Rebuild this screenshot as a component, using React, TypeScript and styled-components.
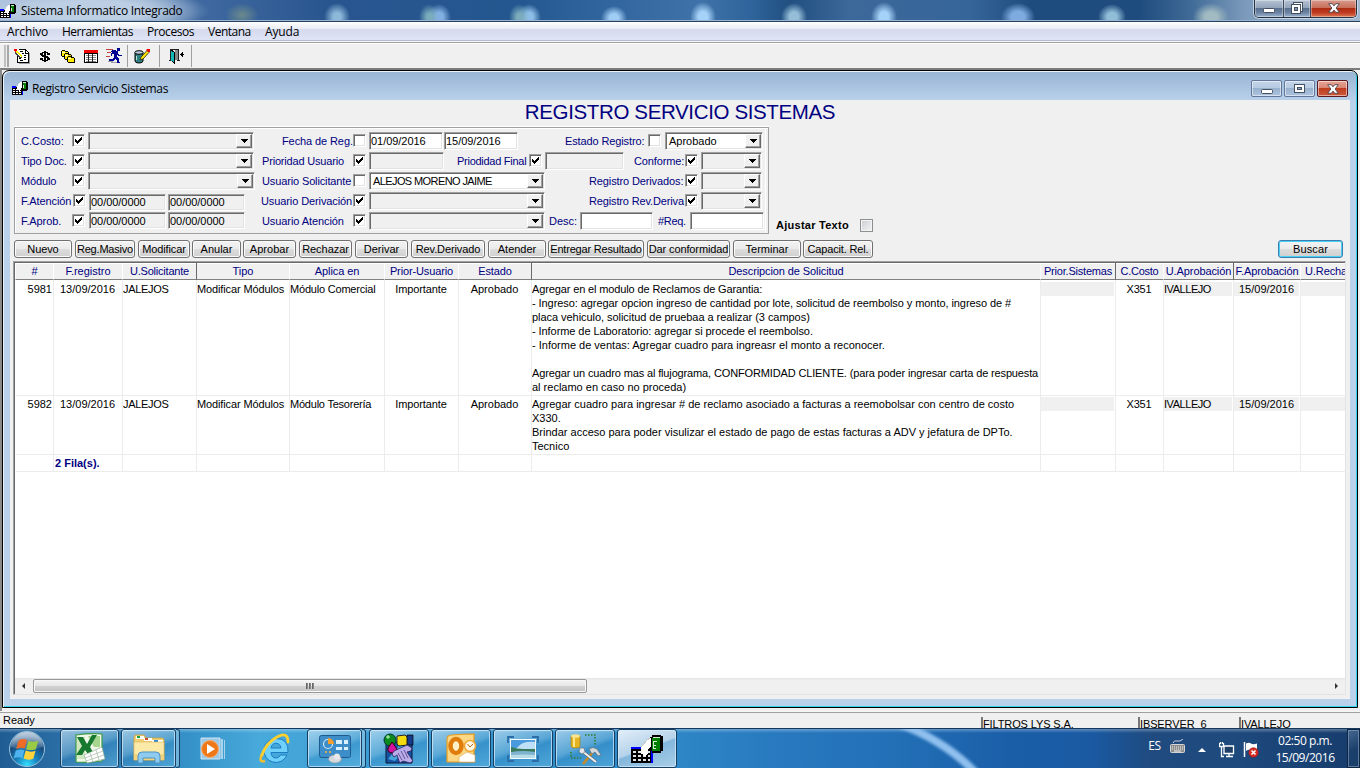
import React from "react";
import styled, { createGlobalStyle, css } from "styled-components";

const Global = createGlobalStyle`
  * { box-sizing: border-box; }
  html, body { margin: 0; padding: 0; width: 1360px; height: 768px; overflow: hidden; background: #f0f0f0; }
  body { font-family: "Liberation Sans", Arial, sans-serif; font-size: 11px; color: #000; }
  svg { display: block; }
`;

const segoe = css`font-family: "Open Sans", "Noto Sans", sans-serif;`;

const Screen = styled.div`
  width: 1360px; height: 768px; display: flex; flex-direction: column; overflow: hidden; background: #f0f0f0;
`;

/* ---------- application title bar ---------- */
const TitleBar = styled.header`
  ${segoe}
  height: 22px; flex: none; display: flex; align-items: flex-start; justify-content: space-between;
  border-bottom: 1px solid #26405f; box-shadow: inset 0 -1px 0 #9db6d0;
  background:
    radial-gradient(ellipse 120px 22px at 90px 11px, rgba(190,208,228,.95) 45%, rgba(190,208,228,0) 100%),
    radial-gradient(ellipse 17px 12px at 242px 15px, rgba(110,140,140,.85) 10%, transparent 100%),
    radial-gradient(ellipse 13px 14px at 337px 17px, rgba(145,190,220,.95) 30%, transparent 100%),
    radial-gradient(ellipse 10px 13px at 429px 17px, rgba(125,175,190,.95) 25%, transparent 100%),
    radial-gradient(ellipse 12px 13px at 439px 17px, rgba(135,180,230,.95) 35%, transparent 100%),
    radial-gradient(ellipse 10px 13px at 519px 17px, rgba(125,175,190,.95) 25%, transparent 100%),
    radial-gradient(ellipse 12px 13px at 529px 17px, rgba(145,195,235,.95) 35%, transparent 100%),
    radial-gradient(ellipse 13px 12px at 614px 18px, rgba(165,210,250,.95) 35%, transparent 100%),
    radial-gradient(ellipse 13px 15px at 703px 17px, rgba(165,210,248,1) 35%, transparent 100%),
    radial-gradient(ellipse 13px 14px at 794px 17px, rgba(155,195,220,.95) 35%, transparent 100%),
    radial-gradient(ellipse 13px 15px at 884px 17px, rgba(165,210,248,1) 35%, transparent 100%),
    radial-gradient(ellipse 17px 14px at 1018px 17px, rgba(130,175,228,.95) 40%, transparent 100%),
    radial-gradient(ellipse 14px 13px at 1112px 17px, rgba(150,195,220,.95) 35%, transparent 100%),
    radial-gradient(ellipse 18px 14px at 1211px 17px, rgba(165,190,195,.95) 35%, transparent 100%),
    linear-gradient(90deg, #a9bfd9 0, #8eabcd 140px, #3f69a0 200px, #29558f 330px, #24578f 520px, #2c6099 570px, #3f72a8 700px, #2f659c 750px, #214f80 790px, #3c689a 850px, #36659a 970px, #1f4c7e 1030px, #1f4c7e 1140px, #3f6a97 1190px, #7c9abb 1245px, #a2b8cf 1360px);
`;
const TitleLeft = styled.div`display: flex; align-items: center; height: 21px; gap: 5px; padding-top: 1px;`;
const AppTitle = styled.span`font-size: 12px; letter-spacing: -0.28px; white-space: nowrap; line-height: 20px;`;

const WinButtons = styled.div`
  display: flex; height: 18px; margin-right: 3px; border: 1px solid #26313f; border-top: 0;
  border-radius: 0 0 5px 5px; overflow: hidden; box-shadow: 0 0 0 1px rgba(220,232,245,.7);
`;
const WinButton = styled.div<{ $w: number; $close?: boolean }>`
  width: ${p => p.$w}px; height: 17px; display: flex; align-items: center; justify-content: center; padding-bottom: 1px;
  border-right: ${p => (p.$close ? "0" : "1px solid #3c4a5c")};
  box-shadow: inset 0 0 0 1px rgba(255,255,255,.35);
  background: ${p => p.$close
    ? "linear-gradient(#d79a8c 0, #c9705d 45%, #ad2d12 50%, #c03c22 75%, #dd7a55 100%)"
    : "linear-gradient(#b6c3d4 0, #93a4bb 45%, #5b7190 50%, #6c83a3 75%, #9db4d0 100%)"};
`;

/* ---------- menu & toolbar ---------- */
const MenuBar = styled.nav`
  ${segoe}
  height: 20px; flex: none; display: flex; align-items: center; padding-left: 7px; gap: 15px; font-size: 12px;
  background: linear-gradient(#fff 0, #e8ebf4 7px, #d4daec 7px, #dfe4f7 18px); border-bottom: 1px solid #f4f5fb;
  box-shadow: inset 0 -1px 0 #b5bccd;
`;
const MenuItem = styled.span<{ $w: number; $ls: number }>`width: ${p => p.$w}px; white-space: nowrap; letter-spacing: ${p => p.$ls}px; line-height: 18px;`;
const Toolbar = styled.div`
  height: 26px; flex: none; display: flex; align-items: stretch; background: #f0f0f0;
  border-top: 1px solid #a0a0a0; box-shadow: inset 0 1px 0 #fff; padding: 2px 0 1px 4px;
`;
const Grip = styled.div`width: 5px; margin-right: 1px; border-left: 2px solid #c0c0c0; border-right: 2px solid #a8a8a8;`;
const ToolGroup = styled.div<{ $w: number; $pad: number }>`
  width: ${p => p.$w}px; padding-left: ${p => p.$pad}px; display: flex; align-items: center;
  border-right: 1px solid #a0a0a0;
`;
const ToolSlot = styled.span`width: 23px; display: flex; justify-content: center;`;

/* ---------- MDI area ---------- */
const MdiArea = styled.main`
  height: 643px; flex: none; background: #f0f0f0; padding: 0 2px 3px 0;
  border-top: 2px solid #7c7c7c; border-left: 2px solid #8a8a8a;
`;
const Child = styled.section`
  width: 1356px; height: 638px; border: 1px solid #000; border-radius: 7px 7px 0 0; overflow: hidden;
  background: linear-gradient(#98b4d4 0, #b9d1ea 30px, #b9d1ea 100%);
  box-shadow: inset 1px 1px 0 #e9f4fc, inset -1px -1px 0 #2fd3ea; padding: 1px 7px 7px;
`;
const ChildTitle = styled.div`
  ${segoe}
  height: 28px; display: flex; align-items: center; font-size: 12px; padding: 5px 2px 0 2px; gap: 4px;
`;
const ChildName = styled.span`flex: 1; letter-spacing: -0.35px; line-height: 22px;`;
const ChildButton = styled.div<{ $close?: boolean }>`
  width: 31px; height: 17px; border: 1px solid ${p => (p.$close ? "#5b1a22" : "#62779a")}; border-radius: 2px;
  display: flex; align-items: center; justify-content: center; box-shadow: inset 0 0 0 1px rgba(255,255,255,.5);
  background: ${p => p.$close
    ? "linear-gradient(#e5a596 0, #d98572 48%, #bf3c1e 50%, #cb5a3c 100%)"
    : "linear-gradient(#c4d5e9 0, #b5cae2 48%, #98b1cd 50%, #adc4df 100%)"};
`;
const ChildButtons = styled.div`display: flex; gap: 2px;`;
const Content = styled.div`height: 599px; width: 1340px; background: #f0f0f0; padding: 0 4px;`;
const Heading = styled.h1`
  margin: 0; height: 27px; line-height: 23px; text-align: center; font-weight: 400; font-size: 20.5px; color: #000080;
  white-space: nowrap; letter-spacing: -0.36px;
`;

/* ---------- filters ---------- */
const FilterRow = styled.div`display: flex; align-items: flex-start; height: 107px;`;
const FilterBox = styled.div`
  width: 755px; height: 107px; border: 1px solid #a0a0a0; box-shadow: inset 1px 1px 0 #fff, inset -2px 0 0 #f0f0f0, inset -3px 0 0 #fff, 0 -1px 0 #fff;
  padding: 3px 0 0 6px;
`;
const Line = styled.div<{ $h?: number }>`display: flex; height: ${p => p.$h ?? 20}px; align-items: center;`;
const Label = styled.span<{ $w: number; $ml?: number; $ls?: number }>`
  width: ${p => p.$w}px; margin-left: ${p => p.$ml ?? 0}px; letter-spacing: ${p => p.$ls ?? 0}px;
  flex: none; white-space: nowrap; color: #000080; line-height: 14px;
`;
const sunken = css`
  border: 1px solid; border-color: #a0a0a0 #fff #fff #a0a0a0;
  box-shadow: inset 1px 1px 0 #696969, inset -1px -1px 0 #e3e3e3;
`;
const CheckBox = styled.span<{ $mr?: number }>`
  ${sunken} width: 13px; height: 13px; flex: none; background: #fff; padding: 2px; margin-right: ${p => p.$mr ?? 3}px; margin-top: -1px;
`;
const Field = styled.div<{ $w: number; $ml?: number; $on?: boolean; $h?: number; $top?: number }>`
  ${sunken} width: ${p => p.$w}px; height: ${p => p.$h ?? 18}px; flex: none; margin-left: ${p => p.$ml ?? 0}px;
  margin-top: ${p => p.$top ?? 0}px;
  background: ${p => (p.$on ? "#fff" : "#f0f0f0")}; padding: 0 2px 0 1px; line-height: 16px; white-space: nowrap;
  display: flex; justify-content: space-between; align-items: center; letter-spacing: -0.04px;
`;
const Drop = styled.span`
  width: 16px; height: 14px; margin-right: -1px; background: #f0f0f0; border: 1px solid; border-color: #fff #696969 #696969 #fff;
  box-shadow: inset -1px -1px 0 #a0a0a0; display: flex; align-items: center; justify-content: center;
`;
const ComboText = styled.span<{ $ls?: number }>`padding-left: 2px; letter-spacing: ${p => p.$ls ?? 0}px;`;
const Adjust = styled.div`margin: 91px 0 0 7px; display: flex; align-items: center; font-weight: 700; letter-spacing: .26px;`;
const AdjustText = styled.span`width: 84px; line-height: 15px; white-space: nowrap;`;
const FlatCheck = styled.span`width: 13px; height: 13px; border: 1px solid #8e8f8f; background: linear-gradient(135deg, #c8ccd1, #f6f6f6); box-shadow: inset 0 0 0 1px #f4f4f4;`;

/* ---------- buttons ---------- */
const Actions = styled.div`display: flex; height: 27px; padding: 6px 3px 0 0;`;
const Btn = styled.button<{ $w: number; $ml?: number; $ls?: number; $focus?: boolean }>`
  width: ${p => p.$w}px; height: 18px; margin: 0 0 0 ${p => p.$ml ?? 0}px; padding: 0; flex: none; font: inherit; line-height: 16px; white-space: nowrap;
  display: flex; justify-content: center; align-items: center; letter-spacing: ${p => p.$ls ?? 0}px;
  border: 1px solid ${p => (p.$focus ? "#3c7fb1" : "#707070")}; border-radius: 3px; overflow: hidden;
  background: linear-gradient(#f2f2f2 0, #ebebeb 48%, #dddddd 50%, #cfcfcf 100%);
  box-shadow: inset 0 0 0 1px ${p => (p.$focus ? "#48d0f5" : "#fcfcfc")};
`;

/* ---------- data grid ---------- */
const COLS = "38px 69px 74px 93px 95px 74px 73px 509px 75px 48px 70px 67px 46px";
const Table = styled.div`
  width: 1333px; height: 434px; margin-left: -1px; border: 1px solid; border-color: #a0a0a0 #e3e3e3 #e3e3e3 #a0a0a0;
  box-shadow: inset 1px 1px 0 #696969; background: #fff; padding: 1px 0 0 1px; display: flex; flex-direction: column;
`;
const Head = styled.div`display: grid; grid-template-columns: ${COLS}; height: 17px; flex: none; background: #f0f0f0; overflow: hidden;`;
const Th = styled.div<{ $raised?: boolean; $ls?: number }>`
  text-align: center; color: #000080; white-space: nowrap; overflow: hidden; line-height: 15px; padding-top: 1px; letter-spacing: ${p => p.$ls ?? 0}px;
  border-bottom: 1px solid #808080; border-left: 1px solid ${p => (p.$raised ? "#696969" : "#fff")}; box-shadow: inset 0 1px 0 #fff;
  &:last-child { text-align: left; padding-left: 4px; }
`;
const Tr = styled.div<{ $h: number; $pt?: number }>`
  display: grid; grid-template-columns: ${COLS}; height: ${p => p.$h}px; flex: none;
  & > div { padding-top: ${p => p.$pt ?? 2}px; }
`;
const Td = styled.div<{ $align?: string; $ls?: number; $bold?: boolean }>`
  border-left: 1px solid #ececec; border-bottom: 1px solid #ececec; line-height: 14px; padding-right: 1px; text-align: ${p => p.$align ?? "left"};
  letter-spacing: ${p => p.$ls ?? 0}px; white-space: nowrap; overflow: hidden;
  &:first-child { border-left-color: transparent; }
  ${p => p.$bold && css`font-weight: 700; color: #000080; padding-left: 1px;`}
`;
const TextLine = styled.div<{ $ls: number }>`height: 14px; letter-spacing: ${p => p.$ls}px;`;
const Shade = styled.div`background: #f0f0f0; height: 14px; margin-left: 0;`;
const Filler = styled.div`flex: 1;`;
const ScrollBar = styled.div`height: 16px; flex: none; display: flex; align-items: center; background: linear-gradient(#e6e6e6 0, #f0f0f0 3px); padding: 0 6px;`;
const Thumb = styled.div`
  width: 554px; height: 14px; margin-left: 7px; border: 1px solid #979797; border-radius: 2px; display: flex; align-items: center; justify-content: center; gap: 1px;
  background: linear-gradient(#f4f4f4 0, #e6e6e6 48%, #d2d2d2 50%, #c2c2c2 100%); box-shadow: inset 0 0 0 1px #f8f8f8;
`;
const ThumbMark = styled.i`width: 2px; height: 6px; background: linear-gradient(90deg, #555, #999);`;
const Spacer = styled.div`flex: 1;`;

/* ---------- status bar ---------- */
const Status = styled.div`
  height: 17px; flex: none; display: flex; border-top: 1px solid #f6f6f6; box-shadow: inset 0 1px 0 #a0a0a0; background: #f0f0f0;
  padding-left: 3px; font-size: 11px; overflow: hidden;
`;
const StatusText = styled.span<{ $w: number }>`width: ${p => p.$w}px; padding-top: 1px; line-height: 14px;`;
const StatusCell = styled.span<{ $w: number }>`
  width: ${p => p.$w}px; margin-top: 5px; line-height: 14px; font-size: 11px; letter-spacing: -.12px; border-left: 2px solid #777; white-space: nowrap;
`;

/* ---------- taskbar ---------- */
const Taskbar = styled.footer`
  position: relative; height: 40px; flex: none; display: flex; align-items: stretch; border-top: 1px solid #17365c; overflow: hidden;
  background: linear-gradient(rgba(255,255,255,.3), rgba(255,255,255,0) 4px),
    linear-gradient(90deg, #1f5c93 0, #2a6ea5 60px, #338fc6 180px, #48a9db 260px, #3696cf 420px, #2f8bc8 640px, #2879bf 780px, #226fb6 900px, #1a5ea8 1010px, #1a5aa3 1090px, #1f4b80 1150px, #1e4a7e 1230px, #163c6c 1360px);
`;
const Streak = styled.svg`position: absolute; left: 640px; top: 0;`;
const TaskBtn = styled.div<{ $w: number; $ml?: number; $kind?: "plain" | "active" }>`
  position: relative; width: ${p => p.$w}px; margin: 0 0 0 ${p => p.$ml ?? 0}px; height: 39px; display: flex; align-items: center; justify-content: center; flex: none;
  ${p => p.$kind !== "plain" && css`
    border: 1px solid #173e63; border-radius: 3px;
    box-shadow: inset 0 0 0 1px rgba(215,238,252,.7);
    background: ${p.$kind === "active"
      ? "linear-gradient(160deg, #e3eef8 0, #b5d3ea 48%, #84b7dc 52%, #a9cfe8 100%)"
      : "linear-gradient(160deg, rgba(200,228,245,.7) 0, rgba(130,190,225,.5) 45%, rgba(60,145,200,.35) 55%, rgba(110,190,230,.5) 100%)"};
  `}
`;
const Stack = styled.i`width: 4px; height: 39px; border: 1px solid #173e63; border-left: 0; border-radius: 0 3px 3px 0; background: rgba(170,215,240,.5); flex: none;`;
const Start = styled.div`width: 60px; padding-left: 8px; display: flex; align-items: center; flex: none;`;
const Tray = styled.div`${segoe} position: relative; flex: 1; display: flex; align-items: center; justify-content: flex-end; color: #fff; font-size: 12px;`;
const Lang = styled.span`font-size: 12px; margin-right: 9px; letter-spacing: -.2px; margin-top: -6px;`;
const TrayIcon = styled.span<{ $mr: number; $top?: number }>`margin-right: ${p => p.$mr}px; margin-top: ${p => p.$top ?? 0}px;`;
const Clock = styled.div`width: 70px; text-align: center; line-height: 17px; letter-spacing: -.45px; margin-right: 7px;`;
const ShowDesktop = styled.div`width: 13px; height: 39px; border: 1px solid #0f2643; box-shadow: inset 0 0 0 1px rgba(140,170,205,.55); background: linear-gradient(150deg, #46688f, #1b3f6b 55%);`;

/* ---------- drawings ---------- */
const DataIcon = () => (
  <svg width="32" height="28" viewBox="0 0 32 28" shapeRendering="crispEdges">
    <path d="M0 13h22v15H0z" fill="#000" />
    <path d="M0 12h10v2H0zM20 12h2v16h-2z" fill="#0000ff" />
    <path d="M2 16h3v2H2zM7 16h3v2H7zM12 16h3v2h-3zM2 20h3v2H2zM7 20h3v2H7zM12 20h3v2h-3zM2 24h3v2H2zM7 24h3v2H7zM12 24h3v2h-3zM17 16h2v2h-2zM17 20h2v2h-2zM17 24h2v2h-2z" fill="#dfe3e8" />
    <path d="M21 0h9v1h2v15h-2v2h-9v-2h-2V2h2z" fill="#000" />
    <path d="M21 3h8v13h-8z" fill="#008000" />
    <path d="M22 2h7v1h-7zM22 6h4v1h-4zM22 10h3v1h-3zM22 7h1v7h-1zM22 13h3v1h-3z" fill="#d6e8d6" />
    <path d="M20 3v9l-3 2v5h-1l-2 3-2-3h-2v-8l3-2 3-4z" fill="#fff" />
    <path d="M19 3l-3 2-3 4-3 3" fill="none" stroke="#c8c8c8" />
  </svg>
);
const DataIconSmall = () => (
  <svg width="16" height="15" viewBox="0 0 16 15" shapeRendering="crispEdges">
    <path d="M0 6h11v8H0z" fill="#000" />
    <path d="M0 5h4v2H0zM10 6h1v8h-1z" fill="#0000ff" />
    <path d="M1 8h2v1H1zM4 8h2v1H4zM7 8h2v1H7zM1 10h2v1H1zM4 10h2v1H4zM7 10h2v1H7zM1 12h2v1H1zM4 12h2v1H4zM7 12h2v1H7z" fill="#fff" />
    <path d="M10 0h5v1h1v8h-1v1h-5z" fill="#000" />
    <path d="M11 2h3v6h-3z" fill="#008000" /><path d="M11 1h3v1h-3zM11 4h1v3h-1z" fill="#d6e8d6" />
    <path d="M8 1h2v6H9v2H8v1H7V9H5V5h1V3h1V2h1z" fill="#fff" />
  </svg>
);
const Check = () => (
  <svg width="7" height="7" viewBox="0 0 7 7" shapeRendering="crispEdges">
    <path d="M0 2h1v1h1v1h1v-1h1v-1h1v-1h1v-1h1v3h-1v1h-1v1h-1v1h-1v1h-1v-1h-1v-1h-1z" fill="#000" />
  </svg>
);
const Arrow = () => <svg width="7" height="4" viewBox="0 0 7 4" shapeRendering="crispEdges"><path d="M0 0h7v1h-1v1h-1v1h-1v1h-1v-1h-1v-1h-1v-1h-1z" fill="#000" /></svg>;
const MinGlyph = () => <svg width="12" height="10" viewBox="0 0 12 10"><rect x=".5" y="5.5" width="11" height="4" rx="1" fill="#fff" stroke="#444f5f" /></svg>;
const MaxGlyph = () => <svg width="11" height="9" viewBox="0 0 11 9"><rect x=".5" y=".5" width="10" height="8" fill="#fff" stroke="#444f5f" /><rect x="3.5" y="3.5" width="4" height="2" fill="#8fa6c3" stroke="#444f5f" /></svg>;
const RestoreGlyph = () => (
  <svg width="12" height="12" viewBox="0 0 12 12"><rect x="2.5" y=".5" width="9" height="9" fill="#fff" stroke="#444f5f" /><rect x=".5" y="2.5" width="9" height="9" fill="#fff" stroke="#444f5f" /><rect x="3.5" y="5.5" width="3" height="3" fill="#8394ad" stroke="#444f5f" /></svg>
);
const CloseGlyph = () => <svg width="12" height="10" viewBox="0 0 12 10"><path d="M.7.7h3.600L6 2.900 7.700.7h3.600L8.100 5l3.200 4.300H7.700L6 7.100 4.300 9.300H.7L3.900 5z" fill="#fff" stroke="#4e4550" strokeWidth=".9" /></svg>;

const NoteIcon = () => (
  <svg width="16" height="16" viewBox="0 0 16 16" shapeRendering="crispEdges">
    <path d="M4 1h8v1h1v1h1v1h1v10h-11z" fill="#fff" />
    <path d="M5 1h7v1H5zM12 2h1v1h-1zM13 3h1v1h-1zM14 4h1v11h-1zM4 14h11v1H4zM3 8h1v7H3zM11 2h1v3h3v1h-4z" fill="#000" />
    <path d="M15 5h1v11H5v-1h10z" fill="#a0a0a0" />
    <path d="M6 3h3v1H6zM8 5h2v1H8zM10 7h2v1h-2zM5 10h2v1H5zM10 9h2v1h-2zM6 12h3v1H6zM10 11h2v1h-2z" fill="#000" />
    <path d="M0 1h3v2H2v1H1V3H0z" fill="#f00" />
    <path d="M2 3h2v1h1v1h1v1h1v1h1v2H7V8H6V7H5V6H4V5H2z" fill="#ffee00" />
    <path d="M1 4h1v1h1v1h1v1h1v1h1v1h2v1H5V9H4V8H3V7H2V6H1z" fill="#444" />
  </svg>
);
const DollarIcon = () => (
  <svg width="10" height="11" viewBox="0 0 10 11" shapeRendering="crispEdges">
    <path d="M4 0h2v11H4zM2 1h6v1H2zM0 2h3v2H0zM7 2h3v2H7zM1 4h3v1H1zM2 5h6v1H2zM6 6h3v1H6zM7 7h3v2H7zM0 7h3v2H0zM2 9h6v1H2z" fill="#000" />
  </svg>
);
const FoldersIcon = () => (
  <svg width="14" height="13" viewBox="0 0 14 13" shapeRendering="crispEdges">
    {[[0, 0], [3, 3], [6, 6]].map(([x, y]) => (
      <g key={x} transform={`translate(${x} ${y})`}>
        <path d="M1 0h3v1h3v1h1v5H1V6H0V1h1z" fill="#000" /><path d="M1 1h3v1h3v4H1z" fill="#ffe900" /><path d="M1 2h3v1H1z" fill="#fffbd0" />
      </g>
    ))}
  </svg>
);
const SheetIcon = () => (
  <svg width="14" height="13" viewBox="0 0 14 13" shapeRendering="crispEdges">
    <path d="M0 0h14v13H0z" fill="#000" /><path d="M0 0h14v3H0z" fill="#f00000" /><path d="M1 4h12v8H1z" fill="#fff" />
    <path d="M2 5h2v1H2zM5 5h3v1H5zM9 5h3v1H9zM2 7h2v1H2zM5 7h3v1H5zM9 7h3v1H9zM2 9h2v1H2zM5 9h3v1H5zM9 9h3v1H9zM2 11h2v1H2zM5 11h3v1H5zM9 11h3v1H9z" fill="#888" />
    <path d="M4 4h1v8H4zM8 4h1v8H8z" fill="#222" />
  </svg>
);
const RunnerIcon = () => (
  <svg width="16" height="16" viewBox="0 0 16 16" shapeRendering="crispEdges">
    <path d="M0 1h7v1H0zM1 4h4v1H1zM0 8h4v1H0z" fill="#c04040" />
    <path d="M11 0h3v3h-3zM6 2h4v1h2v3h1v1h3v1h-4V7h-1v2h1v1h1v4h1v1h-3v-3h-1v-1H9v1H8v1H3v-2h4v-1h1V6H6v2H5V5h1V4H5V3h1z" fill="#000090" />
    <path d="M2 13h5v1H2zM5 14h6v1H5z" fill="#a0a0a8" />
  </svg>
);
const DbEditIcon = () => (
  <svg width="16" height="15" viewBox="0 0 16 15">
    <path d="M1 4v8q0 2 4 2t4-2V4z" fill="#2c8080" stroke="#000" /><ellipse cx="5" cy="3.500" rx="4.200" ry="1.800" fill="#bcd" stroke="#000" />
    <path d="M2.500 7v4" stroke="#b8e0e0" />
    <path d="M6 11l1-3 6-6.500 2 2-6 6.500z" fill="#ffe000" stroke="#222" strokeWidth=".8" /><path d="M12.500 0h3.500v3h-1.500l-2-1.500z" fill="#e00" />
  </svg>
);
const DoorIcon = () => (
  <svg width="16" height="15" viewBox="0 0 16 15" shapeRendering="crispEdges">
    <path d="M1 0h9v12H9V1H2v10H1zM0 11h3v1H0zM8 11h3v1H8z" fill="#222" /><path d="M6 1h3v10H6z" fill="#888" />
    <path d="M2 1h2v1h1v1h1v12H5v-1H4v-1H3v-1H2z" fill="#000" /><path d="M2 2h1v1h2v10H4v-1H2z" fill="#10b8b8" />
    <path d="M12 5h3v1h-3zM11 5h1v1h-1zM12 4h1v3h-1zM13 3h1v5h-1z" fill="#000" />
  </svg>
);

const Orb = () => (
  <svg width="38" height="38" viewBox="0 0 38 38">
    <defs>
      <radialGradient id="orb" cx=".5" cy=".95" r=".85"><stop offset="0" stopColor="#32e0ff" /><stop offset=".35" stopColor="#1886c0" /><stop offset=".75" stopColor="#174a7c" /><stop offset="1" stopColor="#5d86ab" /></radialGradient>
      <linearGradient id="gloss" x2="0" y2="1"><stop offset="0" stopColor="#fff" stopOpacity=".6" /><stop offset="1" stopColor="#fff" stopOpacity=".08" /></linearGradient>
    </defs>
    <circle cx="19" cy="19" r="17.500" fill="url(#orb)" stroke="#9cc4de" strokeWidth="1" />
    <path d="M3 17a16 15 0 0 1 32 0q-16 6-32 0z" fill="url(#gloss)" />
    <path d="M10.500 10.500q4.500-2.500 8.500-.5l-2.300 8.500q-4-1.500-8.500.5z" fill="#ee6b28" />
    <path d="M20.300 10.700q4.500 2 10 0l-2.400 8.500q-5.200 1.800-9.800 0z" fill="#9acb45" />
    <path d="M7.800 20.500q4.500-2 8.600-.3l-2.200 8q-4-1.800-8.600.2z" fill="#4fb4ee" />
    <path d="M17.700 20.600q4.700 2 9.800.2l-2.200 8q-5.200 1.800-9.800-.2z" fill="#ffd33c" />
  </svg>
);
const Excel = () => (
  <svg width="32" height="31" viewBox="0 0 32 31">
    <path d="M2 2q14-2 26-1v27q-14 2-26 1z" fill="#eef7e8" stroke="#3c9a40" strokeWidth="1.200" />
    <path d="M14 3h12v11h-6z" fill="#a5d58e" /><path d="M3 4h8v22H3z" fill="#cfe8c0" />
    <path d="M3 4h6l4 7 5-9h5l-7 12 4 7h-6l-3-4-3 5H2l6-9z" fill="#16792f" />
    <path d="M10 22l18-8 3 12-18 4z" fill="#fff" stroke="#88a888" strokeWidth=".6" /><path d="M11 25l18-7M12 28l18-6M16 20l3 9M22 17l3 10" stroke="#a5b8a5" strokeWidth=".7" />
  </svg>
);
const Folder = () => (
  <svg width="34" height="30" viewBox="0 0 34 30">
    <path d="M2 3q0-2 2-2h8l2 3h16q2 0 2 2v20H2z" fill="#f2cf72" stroke="#c9a143" strokeWidth=".8" />
    <path d="M4 2h8v3H4z" fill="#fff" /><path d="M12 4h8v3h-8z" fill="#fff" /><path d="M20 6h11v3H20z" fill="#fff" />
    <path d="M5 2h3v2H5z" fill="#18a03a" /><path d="M13 4h3v2h-3z" fill="#d34a2a" /><path d="M22 6h4v2h-4z" fill="#2989d6" />
    <path d="M2 8h30v18H2z" fill="#fbe9a8" stroke="#d9b75c" strokeWidth=".6" /><path d="M2 20h30v6H2z" fill="#f3d47d" />
    <path d="M6 29v-7q0-4 4-4h14q4 0 4 4v7h-5v-5H11v5z" fill="#8fcbee" stroke="#4d93c4" />
  </svg>
);
const Media = () => (
  <svg width="28" height="26" viewBox="0 0 28 26">
    <path d="M2 2h19v21H2z" fill="#9cc9e6" stroke="#cfe6f4" /><path d="M22 3h2v20h-2zM25 4h1v19h-1z" fill="#a8d4ee" />
    <circle cx="11" cy="13" r="8.500" fill="#ee7718" stroke="#f6ad70" /><path d="M8 8l8 5-8 5z" fill="#fff" />
  </svg>
);
const Ie = () => (
  <svg width="32" height="32" viewBox="0 0 32 32">
    <path d="M6 28Q-1 30 3 21" fill="none" stroke="#f3c02c" strokeWidth="2.400" />
    <path d="M17 5.500a12 12 0 1 0 11 16.500h-6.500q-1.500 3-4.500 3-4.500 0-5-5.500h17Q30 5.500 17 5.500zM12 15q1-4.700 5-4.700t5 4.700z" fill="#6fd0fa" stroke="#1a7cc4" strokeWidth="1" />
    <path d="M3 22Q7 10 18 4T29 9" fill="none" stroke="#fbd030" strokeWidth="2.800" strokeLinecap="round" />
  </svg>
);
const Control = () => (
  <svg width="34" height="30" viewBox="0 0 34 30">
    <rect x="1.500" y="1.500" width="31" height="22" rx="2" fill="#3d8dc8" stroke="#1d5a90" />
    <circle cx="10" cy="10" r="4.500" fill="none" stroke="#cfe8fa" strokeWidth="1.200" /><path d="M10 10V4a6 6 0 0 1 6 6z" fill="#f5a02c" />
    <path d="M18 6h6v4h-6zM26 6h4v4h-4zM18 13h6v3h-6zM26 13h4v3h-4z" fill="#d9f0ff" /><circle cx="8" cy="18" r="1" fill="#ffb13d" /><circle cx="12" cy="18" r="1" fill="#ffb13d" />
    <ellipse cx="17" cy="25" rx="6.500" ry="4" fill="#d6d9dc" stroke="#8b9298" strokeWidth=".6" /><circle cx="19" cy="22.500" r="3" fill="#e6e8ea" />
  </svg>
);
const Shapes = () => (
  <svg width="32" height="32" viewBox="0 0 32 32">
    <path d="M3 9h26v21H3z" fill="#1552a0" stroke="#0b1838" /><path d="M5 26L23 4h6v5L12 28z" fill="#46a4dd" />
    <path d="M24 2h6v10h-6z" fill="#17398c" stroke="#000" strokeWidth=".7" />
    <circle cx="7" cy="7" r="6" fill="#0c8a1e" stroke="#033" /><path d="M3 4h4M5 2v4" stroke="#bfb" />
    <path d="M14 3l8-1 2 2v8l-8 1-2-2z" fill="#f2dc10" stroke="#222" /><path d="M9 9l5 7q0 4-4 4-6 0-5-5z" fill="#d512a0" stroke="#300" />
    <path d="M11 18l13-6 5 3-1 3-4 1 6 9-3 2-7-2-3 2-1-2-2-6-3 2-2-3z" fill="#b9ace8" stroke="#2b2260" strokeWidth=".8" /><path d="M15 20l4 7M18 18l4 8M21 17l4 8" stroke="#4b3f88" strokeWidth=".8" />
  </svg>
);
const Outlook = () => (
  <svg width="32" height="31" viewBox="0 0 32 31">
    <path d="M2 6q0-4 5-4 10-1 22-1v28H2z" fill="#fbd684" stroke="#e89c1c" strokeWidth="1.200" />
    <path d="M14 24l8-5 8 3v7H14z" fill="#fff" stroke="#dca44a" strokeWidth=".6" />
    <ellipse cx="11" cy="13" rx="5.500" ry="7" fill="#fff0c8" stroke="#e07c0c" strokeWidth="4.500" />
    <circle cx="25" cy="13" r="5.500" fill="#fff8e6" stroke="#f1a733" strokeWidth="1.500" /><path d="M22.500 11l2.500 3 3-3" fill="none" stroke="#b86d10" />
  </svg>
);
const Photo = () => (
  <svg width="32" height="26" viewBox="0 0 32 26">
    <path d="M1 7V1h6M25 1h6v6M31 19v6h-6M7 25H1v-6" fill="none" stroke="#2b6ea8" strokeWidth="1.800" />
    <path d="M3 3h26v20H3z" fill="#f4f9fc" /><path d="M4 4h24v10H4z" fill="#4a9ade" /><path d="M11 11q4-6 17-5v7H8z" fill="#d4ebfa" opacity=".85" />
    <path d="M4 11q6 2 12 2t12 0v5H4z" fill="#3a7a5c" /><path d="M4 16q12-2 24 0v6H4z" fill="#7fb4d0" /><path d="M4 19q12-1 24 0v3H4z" fill="#b8dbe8" />
  </svg>
);
const Tools = () => (
  <svg width="32" height="32" viewBox="0 0 32 32">
    <path d="M2 3v10q0 2 4.500 2t4.500-2V3z" fill="#e6b322" stroke="#a67a0a" strokeWidth=".6" /><path d="M4 4v10h2V4z" fill="#fbe58c" /><ellipse cx="6.500" cy="3" rx="4.500" ry="1.800" fill="#fbe58c" />
    <path d="M16 2h10v10M2 19v6h10" fill="none" stroke="#2f7d2a" strokeWidth="1.500" strokeDasharray="1.500 1.500" />
    <path d="M14 31l10-12" stroke="#c98a22" strokeWidth="2.500" /><path d="M20 16q4-3 8 0l4 6-3 1-3-4-3 2z" fill="#d5dade" stroke="#5f686e" strokeWidth=".7" />
    <path d="M13 18l14 11" stroke="#5f686e" strokeWidth="3" /><path d="M13 18l14 11" stroke="#eef1f3" strokeWidth="2" /><path d="M11 15l4 0 1 4-3 2-3-2z" fill="#e3e7ea" stroke="#5f686e" strokeWidth=".6" />
  </svg>
);
const Keyboard = () => (
  <svg width="16" height="15" viewBox="0 0 16 15"><path d="M3 4q1-3 4-2t6-2" fill="none" stroke="#ccd" /><rect x=".5" y="5.500" width="14" height="8" rx="1" fill="#8d8d8d" stroke="#d5d5d5" /><path d="M2 8h11M2 10h11" stroke="#f0f0f0" strokeDasharray="1 1" /><path d="M4 12h7" stroke="#f0f0f0" /></svg>
);
const Network = () => (
  <svg width="16" height="16" viewBox="0 0 16 16"><path d="M5 4h9.500v7.500H5z" fill="#1f3f66" stroke="#fff" strokeWidth="1.300" /><path d="M7 14.500h7M10 12v2" stroke="#fff" strokeWidth="1.300" /><path d="M.5 1v3.500h4V1M1.500 0v2M3.500 0v2M2.500 5v9.500H5" fill="none" stroke="#fff" strokeWidth="1.300" /></svg>
);
const Flag = () => (
  <svg width="16" height="16" viewBox="0 0 16 16"><path d="M1.500 0v15" stroke="#fff" strokeWidth="1.500" /><path d="M3 1.500q3-1.500 5 0t6 0V9q-4 1-6-.5T3 9z" fill="#fff" /><circle cx="10.500" cy="10.500" r="4.800" fill="#d92b25" stroke="#8a1411" strokeWidth=".5" /><path d="M8.500 8.500l4 4m0-4l-4 4" stroke="#fff" strokeWidth="1.600" /></svg>
);

const Cb = ({ on, mr }: { on?: boolean; mr?: number }) => <CheckBox $mr={mr}>{on && <Check />}</CheckBox>;
const Combo = ({ w, ml, text, on, ls }: { w: number; ml?: number; text?: string; on?: boolean; ls?: number }) => (
  <Field $w={w} $ml={ml} $on={on}><ComboText $ls={ls}>{text}</ComboText><Drop><Arrow /></Drop></Field>
);

const actions: [string, number, number, number?][] = [
  ["Nuevo", 58, 0, -0.1], ["Reg.Masivo", 60, 3, -0.2], ["Modificar", 52, 3, -0.1], ["Anular", 49, 2], ["Aprobar", 53, 2, 0.05], ["Rechazar", 53, 3, -0.05], ["Derivar", 53, 3],
  ["Rev.Derivado", 74, 3, -0.1], ["Atender", 58, 3], ["Entregar Resultado", 96, 2, -0.18], ["Dar conformidad", 83, 3, -0.12], ["Terminar", 68, 3], ["Capacit. Rel.", 70, 2, -0.15],
];
const heads: [string, number, boolean?][] = [
  ["#", 0], ["F.registro", 0], ["U.Solicitante", -0.22], ["Tipo", 0, true], ["Aplica en", -0.1], ["Prior-Usuario", -0.12], ["Estado", -0.1], ["Descripcion de Solicitud", -0.1, true],
  ["Prior.Sistemas", -0.2], ["C.Costo", -0.25, true], ["U.Aprobación", -0.1], ["F.Aprobación", -0.12, true], ["U.Recha", -0.1],
];
type Row = { id: string; area: string; areaLs: number; h: number; pt: number; text: [string, number][] };
const rows: Row[] = [
  {
    id: "5981", area: "Módulo Comercial", areaLs: -0.2, h: 116, pt: 2,
    text: [
      ["Agregar en el modulo de Reclamos de Garantia:", -0.13],
      ["- Ingreso: agregar opcion ingreso de cantidad por lote, solicitud de reembolso y monto, ingreso de #", -0.07],
      ["placa vehiculo, solicitud de pruebaa a realizar (3 campos)", -0.05],
      ["- Informe de Laboratorio: agregar si procede el reembolso.", -0.07],
      ["- Informe de ventas: Agregar cuadro para ingreasr el monto a reconocer.", 0],
      ["", 0],
      ["Agregar un cuadro mas al flujograma, CONFORMIDAD CLIENTE. (para poder ingresar carta de respuesta", -0.14],
      ["al reclamo en caso no proceda)", 0],
    ],
  },
  {
    id: "5982", area: "Módulo Tesorería", areaLs: -0.22, h: 59, pt: 1,
    text: [
      ["Agregar cuadro para ingresar # de reclamo asociado a facturas a reemobolsar con centro de costo", 0.01],
      ["X330.", 0],
      ["Brindar acceso para poder visulizar el estado de pago de estas facturas a ADV y jefatura de DPTo.", 0],
      ["Tecnico", 0],
    ],
  },
];

export default function App() {
  return (
    <Screen>
      <Global />
      <TitleBar>
        <TitleLeft><DataIconSmall /><AppTitle>Sistema Informatico Integrado</AppTitle></TitleLeft>
        <WinButtons>
          <WinButton $w={29}><MinGlyph /></WinButton><WinButton $w={27}><RestoreGlyph /></WinButton><WinButton $w={45} $close><CloseGlyph /></WinButton>
        </WinButtons>
      </TitleBar>
      <MenuBar>
        <MenuItem $w={40} $ls={-0.1}>Archivo</MenuItem><MenuItem $w={70} $ls={-0.5}>Herramientas</MenuItem><MenuItem $w={46} $ls={-0.42}>Procesos</MenuItem>
        <MenuItem $w={42} $ls={-0.5}>Ventana</MenuItem><MenuItem $w={40} $ls={-0.15}>Ayuda</MenuItem>
      </MenuBar>
      <Toolbar>
        <Grip />
        <ToolGroup $w={118} $pad={0}>
          <ToolSlot><NoteIcon /></ToolSlot><ToolSlot><DollarIcon /></ToolSlot><ToolSlot><FoldersIcon /></ToolSlot><ToolSlot><SheetIcon /></ToolSlot><ToolSlot><RunnerIcon /></ToolSlot>
        </ToolGroup>
        <ToolGroup $w={32} $pad={6}><DbEditIcon /></ToolGroup>
        <ToolGroup $w={32} $pad={9}><DoorIcon /></ToolGroup>
      </Toolbar>
      <MdiArea>
        <Child>
          <ChildTitle>
            <DataIconSmall /><ChildName>Registro Servicio Sistemas</ChildName>
            <ChildButtons><ChildButton><MinGlyph /></ChildButton><ChildButton><MaxGlyph /></ChildButton><ChildButton $close><CloseGlyph /></ChildButton></ChildButtons>
          </ChildTitle>
          <Content>
            <Heading>REGISTRO SERVICIO SISTEMAS</Heading>
            <FilterRow>
              <FilterBox>
                <Line>
                  <Label $w={51}>C.Costo:</Label><Cb on /><Combo w={166} />
                  <Label $w={71} $ml={28} $ls={-0.1}>Fecha de Reg.</Label><Cb /><Field $w={74} $on>01/09/2016</Field><Field $w={74} $ml={1} $on>15/09/2016</Field>
                  <Label $w={83} $ml={47} $ls={-0.12}>Estado Registro:</Label><Cb mr={4} /><Combo w={98} text="Aprobado" on />
                </Line>
                <Line>
                  <Label $w={51} $ls={-0.1}>Tipo Doc.</Label><Cb on /><Combo w={166} />
                  <Label $w={91} $ml={8} $ls={-0.18}>Prioridad Usuario</Label><Cb on /><Field $w={75} />
                  <Label $w={72} $ml={13} $ls={-0.27}>Priodidad Final</Label><Cb on /><Field $w={79} />
                  <Label $w={51} $ml={10} $ls={-0.12}>Conforme:</Label><Cb on /><Combo w={61} />
                </Line>
                <Line>
                  <Label $w={51} $ls={-0.15}>Módulo</Label><Cb on /><Combo w={167} />
                  <Label $w={91} $ml={7} $ls={-0.13}>Usuario Solicitante</Label><Cb /><Combo w={176} text="ALEJOS MORENO JAIME" on ls={-0.6} />
                  <Label $w={96} $ml={44} $ls={-0.12}>Registro Derivados:</Label><Cb on /><Combo w={61} />
                </Line>
                <Line>
                  <Label $w={52} $ls={-0.1}>F.Atención</Label><Cb on /><Field $w={77} $h={17} $top={2}>00/00/0000</Field><Field $w={77} $h={17} $top={2} $ml={2}>00/00/0000</Field>
                  <Label $w={92} $ml={16} $ls={-0.1}>Usuario Derivación</Label><Cb on /><Combo w={176} />
                  <Label $w={96} $ml={44} $ls={-0.14}>Registro Rev.Deriva</Label><Cb on /><Combo w={61} />
                </Line>
                <Line $h={19}>
                  <Label $w={51} $ls={-0.1}>F.Aprob.</Label><Cb on mr={4} /><Field $w={77} $h={17}>00/00/0000</Field><Field $w={77} $h={17} $ml={2}>00/00/0000</Field>
                  <Label $w={91} $ml={17} $ls={-0.08}>Usuario Atención</Label><Cb on /><Combo w={176} />
                  <Label $w={31} $ml={4}>Desc:</Label><Field $w={73} $on /><Label $w={32} $ml={5} $ls={-0.3}>#Req.</Label><Field $w={74} $on />
                </Line>
              </FilterBox>
              <Adjust><AdjustText>Ajustar Texto</AdjustText><FlatCheck /></Adjust>
            </FilterRow>
            <Actions>
              {actions.map(([t, w, ml, ls]) => <Btn key={t} $w={w} $ml={ml} $ls={ls}>{t}</Btn>)}
              <Spacer />
              <Btn $w={65} $focus $ls={0.1}>Buscar</Btn>
            </Actions>
            <Table>
              <Head>{heads.map(([t, ls, r]) => <Th key={t} $ls={ls} $raised={r}>{t}</Th>)}</Head>
              {rows.map(r => (
                <Tr key={r.id} $h={r.h} $pt={r.pt}>
                  <Td $align="right">{r.id}</Td><Td $align="center">13/09/2016</Td><Td $ls={-0.3}>JALEJOS</Td><Td $ls={-0.12}>Modificar Módulos</Td><Td $ls={r.areaLs}>{r.area}</Td>
                  <Td $align="center" $ls={-0.12}>Importante</Td><Td $align="center">Aprobado</Td>
                  <Td>{r.text.map(([t, ls], i) => <TextLine key={i} $ls={ls}>{t}</TextLine>)}</Td><Td><Shade /></Td>
                  <Td $align="center" $ls={-0.2}>X351</Td><Td $ls={-0.45}><Shade>IVALLEJO</Shade></Td><Td $align="center"><Shade>15/09/2016</Shade></Td><Td><Shade /></Td>
                </Tr>
              ))}
              <Tr $h={17} $pt={1}><Td /><Td $bold>2 Fila(s).</Td>{heads.slice(2).map(([t]) => <Td key={t} />)}</Tr>
              <Filler />
              <ScrollBar>
                <svg width="5" height="8" viewBox="0 0 5 8"><path d="M4 1v6L1 4z" fill="#333" /></svg>
                <Thumb><ThumbMark /><ThumbMark /><ThumbMark /></Thumb>
                <Spacer />
                <svg width="5" height="8" viewBox="0 0 5 8"><path d="M1 1v6l3-3z" fill="#333" /></svg>
              </ScrollBar>
            </Table>
          </Content>
        </Child>
      </MdiArea>
      <Status>
        <StatusText $w={978}>Ready</StatusText>
        <StatusCell $w={157}>FILTROS LYS S.A.</StatusCell><StatusCell $w={101}>IBSERVER_6</StatusCell><StatusCell $w={100}>IVALLEJO</StatusCell>
      </Status>
      <Taskbar>
        <Streak width="720" height="39" viewBox="0 0 720 39">
          <defs><filter id="soft"><feGaussianBlur stdDeviation="1.6" /></filter></defs>
          <path d="M260-5Q305 12 336 44" fill="none" stroke="#8fc0ee" strokeWidth="8" filter="url(#soft)" />
        </Streak>
        <Start><Orb /></Start>
        <TaskBtn $w={59}><Excel /></TaskBtn>
        <TaskBtn $w={55} $ml={2}><Folder /></TaskBtn><Stack />
        <TaskBtn $w={59} $ml={3} $kind="plain"><Media /></TaskBtn>
        <TaskBtn $w={62} $ml={2} $kind="plain"><Ie /></TaskBtn>
        <TaskBtn $w={55} $ml={1}><Control /></TaskBtn><Stack />
        <TaskBtn $w={60} $ml={3}><Shapes /></TaskBtn>
        <TaskBtn $w={60} $ml={2}><Outlook /></TaskBtn>
        <TaskBtn $w={60} $ml={2}><Photo /></TaskBtn>
        <TaskBtn $w={60} $ml={2}><Tools /></TaskBtn>
        <TaskBtn $w={60} $ml={2} $kind="active"><DataIcon /></TaskBtn>
        <Tray>
          <Lang>ES</Lang>
          <TrayIcon $mr={12} $top={-4}><Keyboard /></TrayIcon>
          <TrayIcon $mr={13} $top={2}><svg width="8" height="4" viewBox="0 0 8 4"><path d="M4 0l4 4H0z" fill="#fff" /></svg></TrayIcon>
          <TrayIcon $mr={8} $top={2}><Network /></TrayIcon>
          <TrayIcon $mr={11} $top={2}><Flag /></TrayIcon>
          <Clock>02:50 p.m.<br />15/09/2016</Clock>
          <ShowDesktop />
        </Tray>
      </Taskbar>
    </Screen>
  );
}
